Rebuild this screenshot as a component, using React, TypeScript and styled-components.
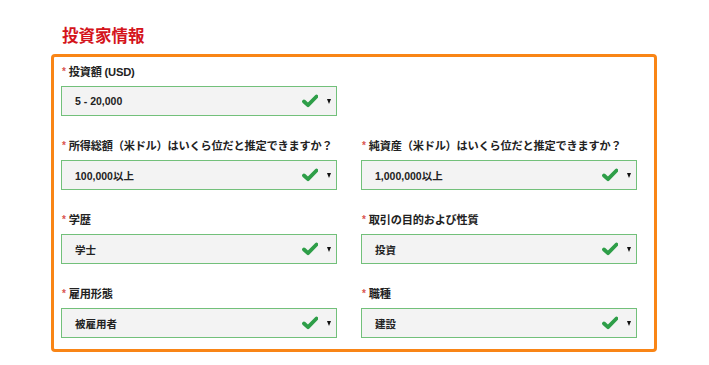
import React from 'react';
import styled, { createGlobalStyle } from 'styled-components';

const GlobalStyle = createGlobalStyle`
  body {
    margin: 0;
    background: #ffffff;
    font-family: 'Liberation Sans', 'Noto Sans CJK JP', Arial, sans-serif;
  }
`;

const Page = styled.div`
  width: 709px;
  height: 365px;
  box-sizing: border-box;
  padding: 24px 0 0 51px;
`;

const Heading = styled.h2`
  margin: 0 0 8px 11px;
  font-size: 16.5px;
  line-height: 22px;
  font-weight: 700;
  color: #d4141b;
  font-family: 'Noto Sans CJK JP', sans-serif;
`;

const Panel = styled.div`
  width: 606px;
  height: 298px;
  box-sizing: border-box;
  border: 3px solid #f98516;
  border-radius: 4px;
  padding: 7px 16px 0 7px;
  display: grid;
  grid-template-columns: 276px 276px;
  column-gap: 24px;
  row-gap: 22px;
  align-content: start;
`;

const Field = styled.div`
  display: flex;
  flex-direction: column;
  gap: 8px;
`;

const Label = styled.div`
  display: flex;
  align-items: center;
  height: 14px;
  font-size: 11.2px;
  font-weight: 700;
  color: #222;
  letter-spacing: -0.2px;
  white-space: nowrap;
  font-family: 'Liberation Sans', 'Noto Sans CJK JP', sans-serif;
`;

const Star = styled.span`
  color: #d9534f;
  font-size: 10px;
  margin: 0 3px 0 1px;
`;

const Select = styled.div`
  height: 30px;
  box-sizing: border-box;
  border: 1px solid #72c07a;
  background: #f3f3f3;
  display: flex;
  align-items: center;
  padding: 0 5px 0 13px;
  font-size: 10.5px;
  font-weight: 700;
  color: #222;
  font-family: 'Liberation Sans', 'Noto Sans CJK JP', sans-serif;
`;

const Value = styled.span`
  flex: 1;
`;

const Arrow = styled.span`
  width: 0;
  height: 0;
  margin-left: 9px;
  border-left: 2.5px solid transparent;
  border-right: 2.5px solid transparent;
  border-top: 5px solid #111;
`;

const Check = () => (
  <svg width="16" height="14" viewBox="0 0 16 14">
    <path d="M2 7.5 L6 11.2 L14.5 2.5" fill="none" stroke="#2e9e48" strokeWidth="3.8" strokeLinecap="round" strokeLinejoin="round" />
  </svg>
);

type FieldProps = { label: string; value: string };

const SelectField = ({ label, value }: FieldProps) => (
  <Field>
    <Label>
      <Star>*</Star>
      {label}
    </Label>
    <Select>
      <Value>{value}</Value>
      <Check />
      <Arrow />
    </Select>
  </Field>
);

export default function App() {
  return (
    <Page>
      <GlobalStyle />
      <Heading>投資家情報</Heading>
      <Panel>
        <SelectField label="投資額 (USD)" value="5 - 20,000" />
        <div />
        <SelectField label="所得総額（米ドル）はいくら位だと推定できますか？" value="100,000以上" />
        <SelectField label="純資産（米ドル）はいくら位だと推定できますか？" value="1,000,000以上" />
        <SelectField label="学歴" value="学士" />
        <SelectField label="取引の目的および性質" value="投資" />
        <SelectField label="雇用形態" value="被雇用者" />
        <SelectField label="職種" value="建設" />
      </Panel>
    </Page>
  );
}
